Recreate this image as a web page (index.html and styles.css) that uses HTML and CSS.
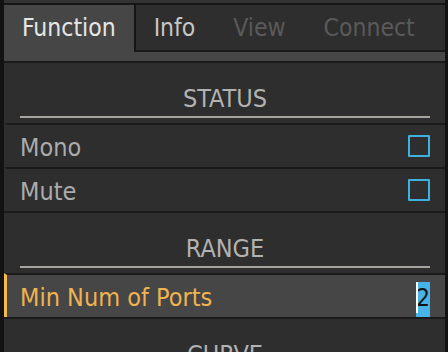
FILE: index.html
```html
<!DOCTYPE html>
<html>
<head>
<meta charset="utf-8">
<link rel="stylesheet" href="styles.css">
</head>
<body>
<div class="app">
  <div class="topline"></div>
  <div class="tabbar">
    <div class="tab active">Function</div>
    <div class="tab info">Info</div>
    <div class="tab disabled">View</div>
    <div class="tab disabled">Connect</div>
    <div class="tab-fill"></div>
  </div>
  <div class="tabband"></div>
  <div class="content">
    <div class="section-header">
      <div class="section-title">STATUS</div>
      <div class="section-rule"></div>
    </div>
    <div class="rows">
      <div class="row">
        <span class="label">Mono</span>
        <span class="checkbox"></span>
      </div>
      <div class="row">
        <span class="label">Mute</span>
        <span class="checkbox"></span>
      </div>
    </div>
    <div class="section-header">
      <div class="section-title">RANGE</div>
      <div class="section-rule"></div>
    </div>
    <div class="rows">
      <div class="row selected">
        <span class="label">Min Num of Ports</span>
        <span class="value">2</span>
      </div>
    </div>
    <div class="section-header">
      <div class="section-title">CURVE</div>
      <div class="section-rule"></div>
    </div>
  </div>
</div>
</body>
</html>
```
FILE: styles.css
```css
html, body {
  margin: 0;
  padding: 0;
  background: #121212;
  height: 100%;
  overflow: hidden;
}
.app {
  margin-left: 4px;
  margin-right: 3px;
  height: 100%;
  background: #2e2e2e;
  font-family: "DejaVu Sans Condensed", "DejaVu Sans", sans-serif;
  font-stretch: condensed;
  font-size: 25px;
  color: #b0b0b0;
}
.topline {
  height: 3px;
  background: #333333;
  border-bottom: 2px solid #151515;
}
.tabbar {
  display: flex;
  height: 47px;
  font-size: 24.5px;
}
.tab {
  padding: 1px 19px 0;
  height: 44px;
  line-height: 44px;
  border-bottom: 2px solid #1a1a1a;
  background: #2e2e2e;
  white-space: nowrap;
}
.tab.active {
  padding: 1px 18px 0;
  background: #464646;
  color: #e6e6e6;
  border-bottom: 2px solid #464646;
}
.tab.info {
  color: #c6c6c6;
  border-left: 2px solid #151515;
  padding-left: 18px;
}
.tab.disabled {
  color: #5a5a5a;
}
.tab-fill {
  flex: 1;
  height: 45px;
  border-bottom: 2px solid #1a1a1a;
}
.tabband {
  height: 9px;
  background: #464646;
  border-bottom: 2px solid #1a1a1a;
}
.content {
  background: #2e2e2e;
}
.section-header {
  height: 60px;
  padding-top: 22px;
  box-sizing: border-box;
}
.section-title {
  text-align: center;
  line-height: 28px;
  color: #b2b2b2;
  padding-left: 1px;
}
.section-rule {
  height: 2px;
  margin: 3px 15px 0 16px;
  background: #a7a39f;
}
.rows {
  border-bottom: 2px solid #1a1a1a;
}
.row {
  display: flex;
  align-items: center;
  height: 42px;
  border-top: 2px solid #1a1a1a;
  border-left: 3px solid transparent;
  padding: 0 15px 0 13px;
}
.label {
  flex: 1;
  line-height: 28px;
  padding-top: 4px;
  color: #ababab;
}
.checkbox {
  width: 18px;
  height: 18px;
  border: 2px solid #3fb1e1;
  border-radius: 1px;
}
.row.selected {
  background: #464646;
  border-left-color: #f6bb4e;
}
.row.selected .label {
  color: #efb350;
}
.value {
  align-self: stretch;
  margin-top: 7px;
  width: 14px;
  background: #47b3e6;
  color: #141414;
  font-size: 24px;
  line-height: 28px;
  padding-top: 2px;
  box-sizing: border-box;
  text-align: right;
  position: relative;
}
.value::before {
  content: "";
  position: absolute;
  left: 0;
  top: 0;
  width: 2px;
  height: 31px;
  background: #ffffff;
}
```
